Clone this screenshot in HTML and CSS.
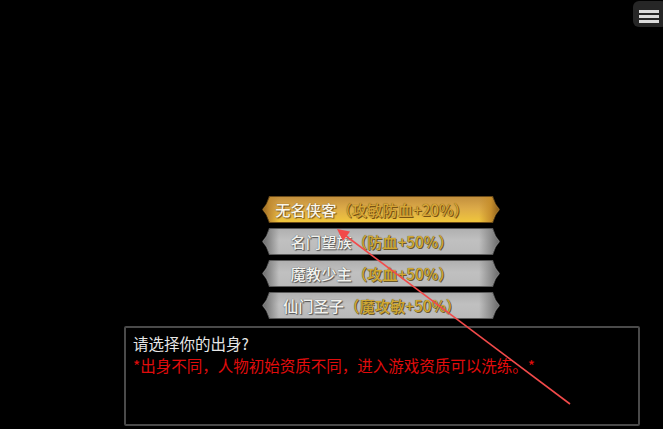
FILE: index.html
```html
<!DOCTYPE html>
<html lang="zh">
<head>
<meta charset="utf-8">
<link rel="stylesheet" href="styles.css">
</head>
<body>
<div class="screen">
  <div class="choices">
    <div class="choice gold"><span class="name">无名侠客</span><span class="bonus">（攻敏防血+20%）</span></div>
    <div class="choice"><span class="name">名门望族</span><span class="bonus">（防血+50%）</span></div>
    <div class="choice"><span class="name">魔教少主</span><span class="bonus">（攻血+50%）</span></div>
    <div class="choice"><span class="name">仙门圣子</span><span class="bonus">（魔攻敏+50%）</span></div>
  </div>
  <div class="dialog">
    <div class="q">请选择你的出身?</div>
    <div class="note">*出身不同，人物初始资质不同，进入游戏资质可以洗练。*</div>
  </div>
  <div class="menu"><span></span><span></span><span></span></div>
  <svg class="arrow" width="663" height="429" viewBox="0 0 663 429">
    <line x1="570" y1="404" x2="342" y2="233" stroke="#f24a4a" stroke-width="1.6"/>
    <polygon points="337,229 350,231.5 343,241" fill="#f24a4a"/>
  </svg>
</div>
</body>
</html>
```
FILE: styles.css
```css
html, body {
  margin: 0;
  padding: 0;
  background: #000;
}
body {
  font-family: "Noto Sans CJK SC", "Noto Sans", sans-serif;
}
.screen {
  position: relative;
  width: 663px;
  height: 429px;
  overflow: hidden;
  background: #000;
  display: flex;
  flex-direction: column;
}
.choices {
  margin: 196px 0 0 262px;
  display: flex;
  flex-direction: column;
  gap: 5px;
  width: 238px;
}
.choice {
  position: relative;
  height: 27px;
  display: flex;
  align-items: center;
  justify-content: center;
  padding-right: 18px;
  font-size: 15.3px;
  font-weight: 500;
  line-height: 27px;
  background: #5a5a5a;
  clip-path: polygon(0 50%, 4px 30%, 7px 0, 231px 0, 234px 30%, 238px 50%, 234px 70%, 231px 100%, 7px 100%, 4px 70%);
}
.choice::before {
  content: "";
  position: absolute;
  inset: 1px;
  background:
    linear-gradient(90deg, #6e6e6e 0, #8e8e8e 7px, transparent 16px, transparent 216px, #8e8e8e 228px, #6a6a6a 236px),
    linear-gradient(180deg, #b0b0b0 0%, #c0c0c0 45%, #bababa 100%);
  clip-path: polygon(0 50%, 4px 28%, 7px 0, 229px 0, 232px 28%, 236px 50%, 232px 72%, 229px 100%, 7px 100%, 4px 72%);
}
.choice.gold {
  background: #6a4a18;
}
.choice.gold::before {
  background:
    linear-gradient(90deg, #9a6a22 0, #c08a30 6px, transparent 16px, transparent 216px, #c68e2c 228px, #8a5e1c 236px),
    linear-gradient(180deg, #c3903e 0%, #dcaa48 45%, #f0c63c 100%);
}
.choice span {
  position: relative;
  white-space: nowrap;
}
.name {
  color: #f2f2ee;
  text-shadow: 0 0 1px #444, 1px 1px 1px #555;
}
.gold .name {
  color: #fbf6e8;
  text-shadow: 0 0 1px #6a4a18, 1px 1px 1px #7a5a20;
}
.bonus {
  color: #d0a834;
  text-shadow: 0 0 1px #5a4a20, 1px 1px 0 #6a5a30;
}
.gold .bonus {
  color: #d6a536;
  text-shadow: 0 0 1px #6a4610, 1px 1px 0 #7a5414;
}
.dialog {
  margin: 7px 0 0 124px;
  width: 516px;
  height: 100px;
  box-sizing: border-box;
  border: 2px solid #4a4a4a;
  border-radius: 2px;
  padding: 4px 7px;
  font-size: 15.5px;
  line-height: 22px;
}
.q {
  color: #e6e6e6;
}
.note {
  color: #e00c0c;
}
.menu {
  position: absolute;
  top: 1px;
  left: 633px;
  width: 34px;
  height: 26px;
  border-radius: 6px;
  background: #262626;
  display: flex;
  flex-direction: column;
  gap: 2.5px;
  padding: 9px 0 0 6px;
  box-sizing: border-box;
}
.menu span {
  display: block;
  width: 20px;
  height: 2.5px;
  background: #dcdcdc;
}
.arrow {
  position: absolute;
  top: 0;
  left: 0;
  pointer-events: none;
}
```
